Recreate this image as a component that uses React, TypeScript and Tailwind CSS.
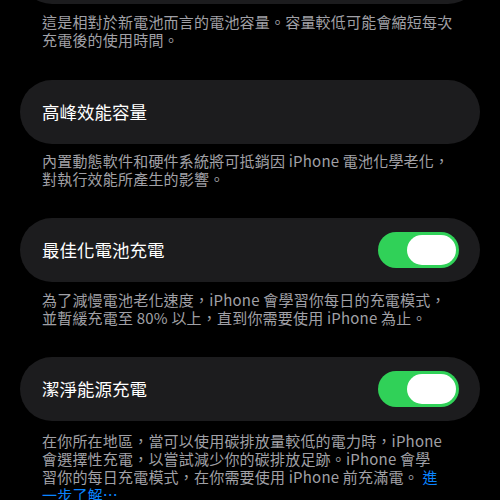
const Toggle = ({ on }: { on: boolean }) => (
  <div
    className={`flex h-[36px] w-[81px] items-center rounded-full p-[3px] ${
      on ? "justify-end bg-[#30d158]" : "justify-start bg-[#39393d]"
    }`}
  >
    <div className="h-[30px] w-[49px] rounded-full bg-white" />
  </div>
);

const Row = ({
  title,
  toggle,
  className = "",
}: {
  title?: string;
  toggle?: boolean;
  className?: string;
}) => (
  <div
    className={`flex h-16 items-center justify-between rounded-full bg-[#1c1c1e] pl-[22px] pr-[21px] ${className}`}
  >
    <span className="text-[17.5px] leading-none text-white">{title}</span>
    {toggle !== undefined && <Toggle on={toggle} />}
  </div>
);

const Footer = ({
  children,
  className = "",
}: {
  children: React.ReactNode;
  className?: string;
}) => (
  <p
    className={`whitespace-nowrap pl-[22px] pr-1 text-[15px] leading-[18px] tracking-[0.2px] text-[#a0a0a6] ${className}`}
  >
    {children}
  </p>
);

export default function App() {
  return (
    <div
      className="h-[500px] w-[500px] overflow-hidden bg-black px-5"
      style={{ fontFamily: '"Noto Sans CJK TC", "Noto Sans", sans-serif' }}
    >
      <div className="flex flex-col">
        <Row className="-mt-[60px]" />
        <Footer className="mt-[9px]">
          這是相對於新電池而言的電池容量。容量較低可能會縮短每次
          <br />
          充電後的使用時間。
        </Footer>

        <Row title="高峰效能容量" className="mt-[31px]" />
        <Footer className="mt-2">
          內置動態軟件和硬件系統將可抵銷因 iPhone 電池化學老化，
          <br />
          對執行效能所產生的影響。
        </Footer>

        <Row title="最佳化電池充電" toggle={true} className="mt-[30px]" />
        <Footer className="mt-[9px]">
          為了減慢電池老化速度，iPhone 會學習你每日的充電模式，
          <br />
          並暫緩充電至 80% 以上，直到你需要使用 iPhone 為止。
        </Footer>

        <Row title="潔淨能源充電" toggle={true} className="mt-[30px]" />
        <Footer className="mt-[11px]">
          在你所在地區，當可以使用碳排放量較低的電力時，iPhone
          <br />
          會選擇性充電，以嘗試減少你的碳排放足跡。iPhone 會學
          <br />
          習你的每日充電模式，在你需要使用 iPhone 前充滿電。{" "}
          <span className="text-[#0a84ff]">
            進
            <br />
            一步了解⋯
          </span>
        </Footer>
      </div>
    </div>
  );
}
